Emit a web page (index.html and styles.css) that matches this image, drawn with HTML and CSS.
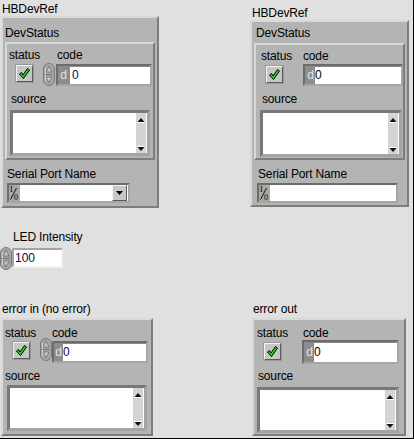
FILE: index.html
```html
<!DOCTYPE html>
<html>
<head>
<meta charset="utf-8">
<link rel="stylesheet" href="styles.css">
</head>
<body>
<div class="panel">
  <div class="col col-l">
    <div class="lbl hb-l-lbl">HBDevRef</div>
    <div class="clu hb-l">
      <div class="lbl ds-lbl">DevStatus</div>
      <div class="clu err e-a">
        <div class="lrow"><span class="lbl ls">status</span><span class="lbl">code</span></div>
        <div class="vrow">
          <div class="led"><svg width="15" height="15" viewBox="0 0 15 15"><polygon points="2.5,8 4.5,6.5 6,9 10.5,2.5 12.5,4 6.5,12.5" fill="#18e018" stroke="#000" stroke-width="1" stroke-linejoin="round"/></svg></div>
          <div class="spin"><svg width="12" height="23" viewBox="0 0 12 23"><rect x="0.5" y="0.5" width="11" height="22" rx="5.5" fill="#a6a6a6" stroke="#7a7a7a"/><path d="M2.5 5 V18" stroke="#d6d6d6"/><path d="M2 11.5 H10" stroke="#7a7a7a"/><path d="M6 3 L9 9 H3 Z" fill="#c9c9c9" stroke="#6a6a6a" stroke-width="0.8"/><path d="M6 20 L9 14 H3 Z" fill="#c9c9c9" stroke="#6a6a6a" stroke-width="0.8"/></svg></div>
          <div class="num ctl"><span class="rad">d</span><span class="nv">0</span></div>
        </div>
        <div class="lbl lsrc">source</div>
        <div class="str"><div class="strin"></div><div class="sb"><svg width="10" height="12" viewBox="0 0 10 12"><path d="M1.5 9 L5 5 L8.5 9 Z" fill="#111"/><path d="M1 9.5 H9" stroke="#fff"/></svg><svg width="10" height="8" viewBox="0 0 10 8"><path d="M1 1.5 H9" stroke="#fff"/><path d="M1.5 2 L5 6 L8.5 2 Z" fill="#111"/></svg></div></div>
      </div>
      <div class="lbl sp-lbl">Serial Port Name</div>
      <div class="path combo">
        <span class="io"><svg width="11" height="16" viewBox="0 0 11 16"><text x="1" y="7" font-family="Liberation Serif" font-size="8">I</text><path d="M1.5 14.5 L7.5 3" stroke="#000" stroke-width="0.9"/><text x="5" y="15" font-family="Liberation Serif" font-size="8">0</text></svg></span>
        <span class="pv"></span>
        <span class="dd"><svg width="7" height="4" viewBox="0 0 7 4"><path d="M0 0 H7 L3.5 4 Z" fill="#000"/></svg></span>
      </div>
    </div>

    <div class="lbl led-lbl">LED Intensity</div>
    <div class="led-row">
      <div class="spin"><svg width="12" height="23" viewBox="0 0 12 23"><rect x="0.5" y="0.5" width="11" height="22" rx="5.5" fill="#a6a6a6" stroke="#7a7a7a"/><path d="M2.5 5 V18" stroke="#d6d6d6"/><path d="M2 11.5 H10" stroke="#7a7a7a"/><path d="M6 3 L9 9 H3 Z" fill="#c9c9c9" stroke="#6a6a6a" stroke-width="0.8"/><path d="M6 20 L9 14 H3 Z" fill="#c9c9c9" stroke="#6a6a6a" stroke-width="0.8"/></svg></div>
      <div class="num2">100</div>
    </div>

    <div class="lbl ei-lbl">error in (no error)</div>
    <div class="clu err e-b">
      <div class="lrow"><span class="lbl ls">status</span><span class="lbl">code</span></div>
      <div class="vrow">
        <div class="led"><svg width="15" height="15" viewBox="0 0 15 15"><polygon points="2.5,8 4.5,6.5 6,9 10.5,2.5 12.5,4 6.5,12.5" fill="#18e018" stroke="#000" stroke-width="1" stroke-linejoin="round"/></svg></div>
        <div class="spin"><svg width="12" height="23" viewBox="0 0 12 23"><rect x="0.5" y="0.5" width="11" height="22" rx="5.5" fill="#a6a6a6" stroke="#7a7a7a"/><path d="M2.5 5 V18" stroke="#d6d6d6"/><path d="M2 11.5 H10" stroke="#7a7a7a"/><path d="M6 3 L9 9 H3 Z" fill="#c9c9c9" stroke="#6a6a6a" stroke-width="0.8"/><path d="M6 20 L9 14 H3 Z" fill="#c9c9c9" stroke="#6a6a6a" stroke-width="0.8"/></svg></div>
        <div class="num ind"><span class="rad">d</span><span class="nv">0</span></div>
      </div>
      <div class="lbl lsrc">source</div>
      <div class="str"><div class="strin"></div><div class="sb"><svg width="10" height="12" viewBox="0 0 10 12"><path d="M1.5 9 L5 5 L8.5 9 Z" fill="#111"/><path d="M1 9.5 H9" stroke="#fff"/></svg><svg width="10" height="8" viewBox="0 0 10 8"><path d="M1 1.5 H9" stroke="#fff"/><path d="M1.5 2 L5 6 L8.5 2 Z" fill="#111"/></svg></div></div>
    </div>
  </div>

  <div class="col col-r">
    <div class="lbl hb-r-lbl">HBDevRef</div>
    <div class="clu hb-r">
      <div class="lbl ds-lbl">DevStatus</div>
      <div class="clu err e-c">
        <div class="lrow"><span class="lbl ls">status</span><span class="lbl">code</span></div>
        <div class="vrow">
          <div class="led"><svg width="15" height="15" viewBox="0 0 15 15"><polygon points="2.5,8 4.5,6.5 6,9 10.5,2.5 12.5,4 6.5,12.5" fill="#18e018" stroke="#000" stroke-width="1" stroke-linejoin="round"/></svg></div>
          <div class="num ind"><span class="rad">d</span><span class="nv">0</span></div>
        </div>
        <div class="lbl lsrc">source</div>
        <div class="str"><div class="strin"></div><div class="sb"><svg width="10" height="12" viewBox="0 0 10 12"><path d="M1.5 9 L5 5 L8.5 9 Z" fill="#111"/><path d="M1 9.5 H9" stroke="#fff"/></svg><svg width="10" height="8" viewBox="0 0 10 8"><path d="M1 1.5 H9" stroke="#fff"/><path d="M1.5 2 L5 6 L8.5 2 Z" fill="#111"/></svg></div></div>
      </div>
      <div class="lbl sp-lbl">Serial Port Name</div>
      <div class="path pind">
        <span class="io"><svg width="11" height="16" viewBox="0 0 11 16"><text x="1" y="7" font-family="Liberation Serif" font-size="8">I</text><path d="M1.5 14.5 L7.5 3" stroke="#000" stroke-width="0.9"/><text x="5" y="15" font-family="Liberation Serif" font-size="8">0</text></svg></span>
        <span class="pv"></span>
      </div>
    </div>

    <div class="lbl eo-lbl">error out</div>
    <div class="clu err e-d">
      <div class="lrow"><span class="lbl ls">status</span><span class="lbl">code</span></div>
      <div class="vrow">
        <div class="led"><svg width="15" height="15" viewBox="0 0 15 15"><polygon points="2.5,8 4.5,6.5 6,9 10.5,2.5 12.5,4 6.5,12.5" fill="#18e018" stroke="#000" stroke-width="1" stroke-linejoin="round"/></svg></div>
        <div class="num ind"><span class="rad">d</span><span class="nv">0</span></div>
      </div>
      <div class="lbl lsrc">source</div>
      <div class="str"><div class="strin"></div><div class="sb"><svg width="10" height="12" viewBox="0 0 10 12"><path d="M1.5 9 L5 5 L8.5 9 Z" fill="#111"/><path d="M1 9.5 H9" stroke="#fff"/></svg><svg width="10" height="8" viewBox="0 0 10 8"><path d="M1 1.5 H9" stroke="#fff"/><path d="M1.5 2 L5 6 L8.5 2 Z" fill="#111"/></svg></div></div>
    </div>
  </div>
</div>
</body>
</html>
```

FILE: styles.css
```css
* { box-sizing: border-box; }
html, body { margin: 0; padding: 0; background: #e0e0e0; }
body { font-family: "Liberation Sans", Arial, sans-serif; font-size: 12px; color: #000; }

.panel {
  width: 414px; height: 439px; background: #e0e0e0;
  border-right: 1px solid #000; border-bottom: 1px solid #000;
  display: flex; overflow: hidden;
}
.col { display: flex; flex-direction: column; align-items: flex-start; }
.col-l { width: 250px; }
.col-r { flex: 1; }

.lbl { font-size: 12px; line-height: 14px; height: 14px; white-space: nowrap; letter-spacing: -0.15px; }

.clu {
  background: #b4b4b4;
  border: 2px solid; border-color: #d9d9d9 #7d7d7d #7d7d7d #d9d9d9;
  display: flex; flex-direction: column; align-items: flex-start;
}

/* left HBDevRef */
.hb-l-lbl { margin: 2px 0 0 2px; }
.hb-l { margin-left: 1px; width: 158px; height: 192px; }
.hb-l .ds-lbl { margin: 8px 0 0 2px; }
.hb-l .e-a { margin: 2px 0 0 2px; }
.hb-l .sp-lbl { margin: 7px 0 0 4px; }
.hb-l .combo { margin: 2px 0 0 4px; width: 123px; height: 20px; }

/* right HBDevRef */
.hb-r-lbl { margin: 6px 0 0 2px; }
.hb-r { width: 159px; height: 187px; }
.hb-r .ds-lbl { margin: 4px 0 0 4px; }
.hb-r .e-c { margin: 3px 0 0 2px; }
.hb-r .sp-lbl { margin: 7px 0 0 6px; }
.hb-r .pind { margin: 2px 0 0 5px; width: 141px; height: 20px; }

/* error cluster common */
.err .lrow { display: flex; }
.err .vrow { display: flex; align-items: flex-start; height: 29px; }
.led {
  width: 17px; height: 17px; flex: none;
  border: 1px solid; border-color: #f4f4f4 #5a5a5a #5a5a5a #f4f4f4;
  background: #c6c6c6; box-shadow: 0 0 0 1px #9a9a9a;
}
.led svg { display: block; }
.spin { width: 12px; height: 23px; flex: none; }
.spin svg { display: block; }

.num {
  display: flex; flex: none; background: #fff;
  border: 2px solid; border-color: #6c6c6c #a6a6a6 #a6a6a6 #6c6c6c;
  box-shadow: inset 1px 1px 0 #888;
  line-height: 18px;
}
.num .rad { background: #8c8c8c; color: #e4e4e4; text-align: right; padding-right: 1px; }
.num.ctl .rad { width: 12px; padding-right: 3px; }
.num.ind .rad { width: 10px; }
.num .nv { padding-left: 2px; color: #0a0a50; }
.num.ind .nv { padding-left: 0; color: #000; }

.str {
  display: flex; background: #fff;
  border: 3px solid; border-color: #787878 #a4a4a4 #a4a4a4 #787878;
}
.strin { flex: 1; }
.sb {
  width: 12px; background: #d4d4d4;
  border-left: 1px solid #fff; border-right: 1px solid #fff;
  display: flex; flex-direction: column; justify-content: space-between;
}
.sb svg { display: block; }

/* instance A */
.e-a { width: 150px; height: 118px; }
.e-a .lrow { margin-top: 4px; }
.e-a .ls { margin-left: 2px; width: 48px; }
.e-a .vrow { height: 30px; }
.e-a .led { margin: 3px 0 0 9px; }
.e-a .spin { margin: 1px 0 0 10px; }
.e-a .num { margin: 2px 0 0 1px; width: 96px; height: 22px; }
.e-a .lsrc { margin-left: 4px; }
.e-a .str { margin: 4px 0 0 3px; width: 140px; height: 46px; }

/* instance B: error in */
.ei-lbl { margin: 32px 0 0 2px; }
.e-b { margin: 2px 0 0 1px; width: 152px; height: 118px; }
.e-b .lrow { margin-top: 6px; }
.e-b .ls { margin-left: 2px; width: 47px; }
.e-b .led { margin: 2px 0 0 10px; }
.e-b .spin { margin: -2px 0 0 10px; }
.e-b .num { margin: 1px 0 0 0; width: 96px; height: 22px; }
.e-b .num .rad { width: 9px; }
.e-b .num .nv { padding-left: 0; color: #0a0a50; }
.e-b .lsrc { margin-left: 2px; }
.e-b .str { margin: 2px 0 0 4px; width: 140px; height: 46px; }

/* instance C */
.e-c { width: 151px; height: 117px; }
.e-c .lrow { margin-top: 4px; }
.e-c .ls { margin-left: 5px; width: 42px; }
.e-c .led { margin: 3px 0 0 10px; }
.e-c .num { margin: 1px 0 0 20px; width: 100px; height: 22px; }
.e-c .lsrc { margin-left: 6px; }
.e-c .str { margin: 4px 0 0 4px; width: 142px; height: 47px; }

/* instance D: error out */
.eo-lbl { margin: 95px 0 0 3px; }
.e-d { margin: 2px 0 0 2px; width: 154px; height: 118px; }
.e-d .lrow { margin-top: 6px; }
.e-d .ls { margin-left: 3px; width: 46px; }
.e-d .led { margin: 3px 0 0 10px; }
.e-d .num { margin: 0 0 0 21px; width: 97px; height: 24px; line-height: 20px; }
.e-d .lsrc { margin-left: 4px; }
.e-d .str { margin: 4px 0 0 3px; width: 142px; height: 46px; }

/* path / combo */
.path {
  display: flex; background: #fff;
  border: 2px solid; border-color: #6c6c6c #a6a6a6 #a6a6a6 #6c6c6c;
}
.path .io { width: 11px; background: #a8a8a8; flex: none; }
.path .io svg { display: block; }
.path .pv { flex: 1; }
.path .dd {
  width: 15px; flex: none; margin: 0 1px 0 0;
  border: 1px solid; border-color: #f4f4f4 #5a5a5a #5a5a5a #f4f4f4;
  background: #c8c8c8;
  display: flex; align-items: center; justify-content: center;
}
.path .dd svg { display: block; }

/* LED Intensity */
.led-lbl { margin: 22px 0 0 13px; }
.led-row { display: flex; align-items: flex-start; margin-top: 3px; height: 23px; }
.num2 {
  margin-top: 1px; width: 51px; height: 20px; background: #fff;
  border: 2px solid; border-color: #a4a4a4 #f2f2f2 #f2f2f2 #a4a4a4;
  padding-left: 1px; line-height: 16px; color: #0a0a50;
}
```
